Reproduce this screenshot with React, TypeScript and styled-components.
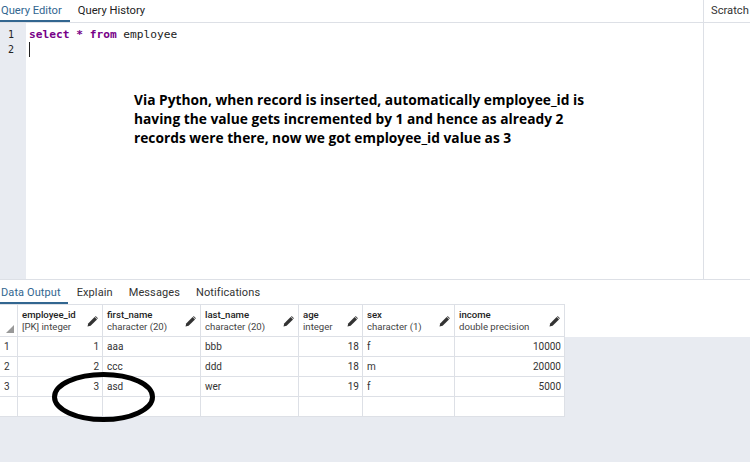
import { createGlobalStyle } from "styled-components";
import styled from "styled-components";

const Global = createGlobalStyle`
  html, body { margin: 0; padding: 0; background: #fff; }
  body { font-family: Roboto, "Liberation Sans", sans-serif; }
`;

const Page = styled.div`
  position: relative;
  width: 750px;
  height: 462px;
  overflow: hidden;
  display: flex;
  flex-direction: column;
  background: #fff;
`;

const TopBar = styled.div`
  display: flex;
  height: 23px;
  box-sizing: border-box;
  border-bottom: 1px solid #dde0e6;
  flex: none;
`;

const Tabs = styled.div`
  display: flex;
  flex: 1;
`;

const Tab = styled.div<{ $active?: boolean }>`
  height: 100%;
  box-sizing: border-box;
  padding: 4px 8px 0 1px;
  margin-right: 7px;
  font-size: 11.2px;
  line-height: 14px;
  color: ${(p) => (p.$active ? "#326690" : "#222")};
  border-bottom: 2px solid ${(p) => (p.$active ? "#326690" : "transparent")};
  white-space: nowrap;
`;

const ScratchTab = styled.div`
  width: 47px;
  box-sizing: border-box;
  border-left: 1px solid #dde0e6;
  padding: 4px 0 0 7px;
  font-size: 11.2px;
  line-height: 14px;
  color: #333;
  white-space: nowrap;
`;

const EditorArea = styled.div`
  display: flex;
  height: 256px;
  flex: none;
`;

const Gutter = styled.div`
  width: 26px;
  background: #e8ebf1;
  padding-top: 4px;
  flex: none;
`;

const LineNumber = styled.div`
  font-family: "DejaVu Sans Mono", "Liberation Mono", monospace;
  font-size: 10px;
  line-height: 15px;
  height: 15px;
  padding-left: 8px;
  color: #222;
`;

const Code = styled.div`
  flex: 1;
  padding: 4px 0 0 3px;
  font-family: "DejaVu Sans Mono", "Liberation Mono", monospace;
  font-size: 11.2px;
  line-height: 15px;
  color: #222;
  white-space: pre;
`;

const Keyword = styled.span`
  color: #770088;
  font-weight: 700;
`;

const Caret = styled.div`
  width: 1px;
  height: 15px;
  background: #222;
`;

const ScratchPane = styled.div`
  width: 47px;
  box-sizing: border-box;
  border-left: 1px solid #dde0e6;
  flex: none;
`;

const OutputTabs = styled.div`
  display: flex;
  height: 25px;
  box-sizing: border-box;
  border-top: 1px solid #dde0e6;
  flex: none;
`;

const OutputTab = styled.div<{ $active?: boolean }>`
  box-sizing: border-box;
  height: 24px;
  padding: 6px ${(p) => (p.$active ? "7px" : "9px")} 0 1px;
  margin-right: ${(p) => (p.$active ? "8px" : "6px")};
  font-size: 11px;
  line-height: 13px;
  letter-spacing: 0.1px;
  color: ${(p) => (p.$active ? "#326690" : "#333")};
  border-bottom: 2px solid ${(p) => (p.$active ? "#326690" : "transparent")};
`;

const GridWrap = styled.div`
  flex: 1;
  background: #e8ebf1;
  position: relative;
`;

const HeaderStrip = styled.div`
  background: #fff;
  height: 33px;
  position: absolute;
  left: 0;
  right: 0;
  top: 0;
`;

const Grid = styled.div`
  position: relative;
  display: grid;
  width: 565px;
  grid-template-columns: 18px 85px 98px 98px 64px 92px 110px;
  grid-template-rows: 33px repeat(4, 20px);
`;

const Cell = styled.div<{ $right?: boolean }>`
  box-sizing: border-box;
  background: #fff;
  border-right: 1px solid #dde0e6;
  border-bottom: 1px solid #dde0e6;
  font-size: 10px;
  line-height: 18px;
  padding: 1px 3px 0 4px;
  color: #333;
  text-align: ${(p) => (p.$right ? "right" : "left")};
  white-space: nowrap;
  overflow: hidden;
`;

const Corner = styled(Cell)`
  border-top: 1px solid #dde0e6;
  position: relative;
`;

const CornerMark = styled.div`
  position: absolute;
  right: 3px;
  bottom: 3px;
  width: 0;
  height: 0;
  border-left: 8px solid transparent;
  border-bottom: 8px solid #999;
`;

const HeaderCell = styled.div`
  box-sizing: border-box;
  background: #fff;
  border-top: 1px solid #dde0e6;
  border-right: 1px solid #dde0e6;
  border-bottom: 1px solid #dde0e6;
  padding: 4px 4px 0 4px;
  display: flex;
  justify-content: space-between;
  align-items: center;
`;

const HeaderText = styled.div`
  align-self: flex-start;
  font-size: 9.6px;
  line-height: 12px;
  white-space: nowrap;
`;

const ColName = styled.div`
  color: #222;
  font-weight: 500;
`;

const ColType = styled.div`
  color: #444;
`;

const Annotation = styled.div`
  position: absolute;
  left: 134px;
  top: 90px;
  font-family: "Open Sans", Lato, sans-serif;
  font-weight: 700;
  font-size: 13.75px;
  line-height: 19px;
  color: #000;
  white-space: nowrap;
`;

const Ellipse = styled.svg`
  position: absolute;
  left: 48px;
  top: 370px;
`;

function Pencil() {
  return (
    <svg width="11" height="11" viewBox="0 0 11 11" style={{ marginBottom: 2 }}>
      <path d="M0.5 10.5 L1.2 7.4 L7.6 1 L10 3.4 L3.6 9.8 Z" fill="#333" />
      <path d="M7.9 0.7 L8.7 0 L11 2.3 L10.3 3.1 Z" fill="#555" />
    </svg>
  );
}

const columns = [
  { name: "employee_id", type: "[PK] integer" },
  { name: "first_name", type: "character (20)" },
  { name: "last_name", type: "character (20)" },
  { name: "age", type: "integer" },
  { name: "sex", type: "character (1)" },
  { name: "income", type: "double precision" },
];

const rows = [
  ["1", "1", "aaa", "bbb", "18", "f", "10000"],
  ["2", "2", "ccc", "ddd", "18", "m", "20000"],
  ["3", "3", "asd", "wer", "19", "f", "5000"],
  ["", "", "", "", "", "", ""],
];

// numeric columns are right aligned
const rightAligned = [1, 4, 6];

export default function App() {
  return (
    <Page>
      <Global />
      <TopBar>
        <Tabs>
          <Tab $active>Query Editor</Tab>
          <Tab>Query History</Tab>
        </Tabs>
        <ScratchTab>Scratch</ScratchTab>
      </TopBar>
      <EditorArea>
        <Gutter>
          <LineNumber>1</LineNumber>
          <LineNumber>2</LineNumber>
        </Gutter>
        <Code>
          <div>
            <Keyword>select</Keyword> <Keyword>*</Keyword> <Keyword>from</Keyword> employee
          </div>
          <Caret />
        </Code>
        <ScratchPane />
      </EditorArea>
      <OutputTabs>
        <OutputTab $active>Data Output</OutputTab>
        <OutputTab>Explain</OutputTab>
        <OutputTab>Messages</OutputTab>
        <OutputTab>Notifications</OutputTab>
      </OutputTabs>
      <GridWrap>
        <HeaderStrip />
        <Grid>
          <Corner>
            <CornerMark />
          </Corner>
          {columns.map((c) => (
            <HeaderCell key={c.name}>
              <HeaderText>
                <ColName>{c.name}</ColName>
                <ColType>{c.type}</ColType>
              </HeaderText>
              <Pencil />
            </HeaderCell>
          ))}
          {rows.map((row, r) =>
            row.map((v, i) => (
              <Cell key={`${r}-${i}`} $right={rightAligned.includes(i)}>
                {v}
              </Cell>
            ))
          )}
        </Grid>
      </GridWrap>
      <Annotation>
        Via Python, when record is inserted, automatically employee_id is
        <br />
        having the value gets incremented by 1 and hence as already 2
        <br />
        records were there, now we got employee_id value as 3
      </Annotation>
      <Ellipse width="110" height="56" viewBox="0 0 110 56">
        <ellipse cx="55.5" cy="27" rx="49" ry="22.5" fill="none" stroke="#000" strokeWidth="5" />
      </Ellipse>
    </Page>
  );
}
